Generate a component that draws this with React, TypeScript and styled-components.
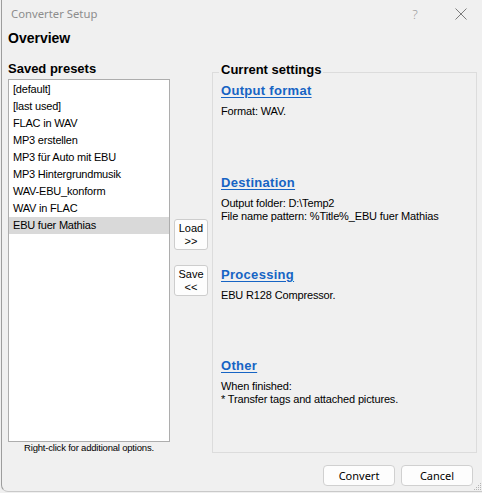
import React from "react";
import styled, { createGlobalStyle } from "styled-components";

const GlobalStyle = createGlobalStyle`
  html, body {
    margin: 0;
    padding: 0;
    background: #f0f0f0;
  }
  body {
    width: 482px;
    height: 493px;
    overflow: hidden;
  }
`;

const UI_FONT = `Tahoma, "Liberation Sans", Arial, sans-serif`;
const SEGOE = `"Segoe UI", "Noto Sans", "Liberation Sans", sans-serif`;

const Window = styled.div`
  box-sizing: border-box;
  position: relative;
  width: 481px;
  height: 492px;
  margin-left: 1px;
  border-left: 1px solid #9d9d9d;
  border-bottom: 1px solid #c9c9c9;
  border-bottom-left-radius: 7px;
  background: #f0f0f0;
  display: flex;
  flex-direction: column;
  font-family: ${UI_FONT};
  font-size: 11px;
  color: #000;
`;

const TitleBar = styled.div`
  height: 27px;
  display: flex;
  align-items: center;
  padding-left: 9px;
`;

const TitleText = styled.span`
  font-family: ${SEGOE};
  font-size: 11.3px;
  line-height: 27px;
  color: #8d8d8d;
`;

const CaptionButtons = styled.div`
  margin-left: auto;
  display: flex;
  height: 100%;
`;

const CaptionButton = styled.div<{ $w: number }>`
  width: ${(p) => p.$w}px;
  height: 27px;
  display: flex;
  align-items: center;
  justify-content: center;
  font-family: ${SEGOE};
  font-size: 13px;
  font-weight: 300;
  color: #9a9a9a;
`;

const Heading = styled.h1`
  margin: 3px 0 0 6px;
  font-family: ${UI_FONT};
  font-size: 14px;
  line-height: 16px;
  font-weight: bold;
`;

const Main = styled.div`
  display: flex;
  align-items: stretch;
  gap: 4px;
  margin-top: 15px;
  padding: 0 5px 0 6px;
`;

const LeftColumn = styled.div`
  width: 162px;
  display: flex;
  flex-direction: column;
`;

const SectionLabel = styled.div`
  font-size: 13px;
  line-height: 15px;
  font-weight: bold;
  margin-bottom: 3px;
`;

const PresetList = styled.ul`
  box-sizing: border-box;
  list-style: none;
  margin: 0;
  padding: 1px 0;
  height: 363px;
  background: #fff;
  border: 1px solid #adadad;
`;

const PresetItem = styled.li<{ $selected?: boolean }>`
  height: 17px;
  line-height: 17px;
  padding-left: 4px;
  letter-spacing: -0.2px;
  white-space: nowrap;
  background: ${(p) => (p.$selected ? "#d9d9d9" : "transparent")};
`;

const Hint = styled.div`
  font-size: 9.5px;
  line-height: 11px;
  letter-spacing: -0.2px;
  text-align: center;
`;

const TransferColumn = styled.div`
  width: 34px;
  align-self: center;
  display: flex;
  flex-direction: column;
  gap: 15px;
  margin-top: 1px;
`;

const SmallButton = styled.button`
  box-sizing: border-box;
  width: 34px;
  height: 31px;
  padding: 0;
  border: 1px solid #cdcdcd;
  border-radius: 3px;
  background: #fdfdfd;
  font-family: ${UI_FONT};
  font-size: 11px;
  line-height: 13px;
  color: #000;
  display: flex;
  flex-direction: column;
  align-items: center;
  justify-content: center;
`;

const GroupBox = styled.fieldset`
  flex: 1;
  min-width: 0;
  margin: 1px 0 0 0;
  padding: 0 8px 2px 8px;
  border: 1px solid #dcdcdc;
  display: flex;
  flex-direction: column;
`;

const GroupLegend = styled.legend`
  margin-left: -2px;
  padding: 0 2px 6px 2px;
  font-size: 13px;
  line-height: 15px;
  font-weight: bold;
`;

const Sections = styled.div`
  flex: 1;
  min-height: 0;
  display: grid;
  grid-template-rows: repeat(4, 1fr);
`;

const Section = styled.div`
  display: flex;
  flex-direction: column;
  align-items: flex-start;
`;

const SectionLink = styled.a`
  font-size: 13px;
  line-height: 15px;
  font-weight: bold;
  letter-spacing: 0.3px;
  color: #1664c4;
  text-decoration: underline;
  text-underline-offset: 2px;
  cursor: pointer;
`;

const SectionText = styled.div`
  margin-top: 7px;
  line-height: 13px;
  letter-spacing: -0.15px;
  white-space: pre;
`;

const Footer = styled.div`
  display: flex;
  justify-content: flex-end;
  gap: 6px;
  padding: 12px 9px 0 0;
`;

const DialogButton = styled.button`
  box-sizing: border-box;
  width: 72px;
  height: 21px;
  padding: 0;
  border: 1px solid #d0d0d0;
  border-radius: 4px;
  background: #fdfdfd;
  font-family: ${SEGOE};
  font-size: 11px;
  color: #000;
`;

const Grip = styled.svg`
  position: absolute;
  right: 0;
  bottom: 0;
`;

const presets = [
  "[default]",
  "[last used]",
  "FLAC in WAV",
  "MP3 erstellen",
  "MP3 für Auto mit EBU",
  "MP3 Hintergrundmusik",
  "WAV-EBU_konform",
  "WAV in FLAC",
  "EBU fuer Mathias",
];

const sections = [
  { title: "Output format", text: "Format: WAV." },
  {
    title: "Destination",
    text: "Output folder: D:\\Temp2\nFile name pattern: %Title%_EBU fuer Mathias",
  },
  { title: "Processing", text: "EBU R128 Compressor." },
  {
    title: "Other",
    text: "When finished:\n* Transfer tags and attached pictures.",
  },
];

export default function App() {
  return (
    <>
      <GlobalStyle />
      <Window>
        <TitleBar>
          <TitleText>Converter Setup</TitleText>
          <CaptionButtons>
            <CaptionButton $w={50}>?</CaptionButton>
            <CaptionButton $w={42}>
              <svg width="12" height="12" viewBox="0 0 12 12">
                <path d="M0.5 0.5 L11.5 11.5 M11.5 0.5 L0.5 11.5" stroke="#7c7c7c" strokeWidth="1" fill="none" />
              </svg>
            </CaptionButton>
          </CaptionButtons>
        </TitleBar>
        <Heading>Overview</Heading>
        <Main>
          <LeftColumn>
            <SectionLabel>Saved presets</SectionLabel>
            <PresetList>
              {presets.map((p, i) => (
                <PresetItem key={p} $selected={i === presets.length - 1}>
                  {p}
                </PresetItem>
              ))}
            </PresetList>
            <Hint>Right-click for additional options.</Hint>
          </LeftColumn>
          <TransferColumn>
            <SmallButton>
              <span>Load</span>
              <span>&gt;&gt;</span>
            </SmallButton>
            <SmallButton>
              <span>Save</span>
              <span>&lt;&lt;</span>
            </SmallButton>
          </TransferColumn>
          <GroupBox>
            <GroupLegend>Current settings</GroupLegend>
            <Sections>
              {sections.map((s) => (
                <Section key={s.title}>
                  <SectionLink>{s.title}</SectionLink>
                  <SectionText>{s.text}</SectionText>
                </Section>
              ))}
            </Sections>
          </GroupBox>
        </Main>
        <Footer>
          <DialogButton>Convert</DialogButton>
          <DialogButton>Cancel</DialogButton>
        </Footer>
        <Grip width="8" height="8" viewBox="0 0 8 8">
          {[
            [6, 0],
            [4, 2],
            [6, 2],
            [2, 4],
            [4, 4],
            [6, 4],
            [0, 6],
            [2, 6],
            [4, 6],
            [6, 6],
          ].map(([x, y]) => (
            <rect key={`${x}-${y}`} x={x} y={y} width="1" height="1" fill="#b5b5b5" />
          ))}
        </Grip>
      </Window>
    </>
  );
}
